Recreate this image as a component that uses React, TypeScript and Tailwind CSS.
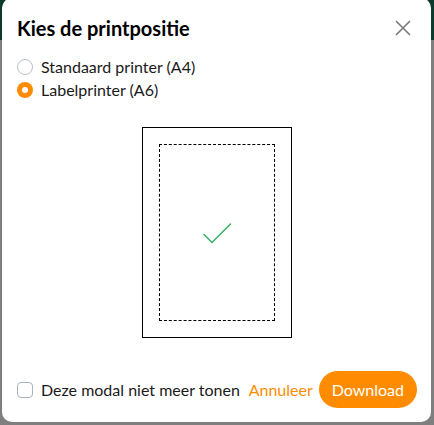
import { useState } from "react";

const font = { fontFamily: "Lato, 'Open Sans', sans-serif" };

function Radio({ checked, label, onClick }: { checked: boolean; label: string; onClick: () => void }) {
  return (
    <button onClick={onClick} className="flex items-center gap-2 h-[23px] text-[16px] leading-[23px] text-[#1a1a1a]">
      {checked ? (
        <span className="w-4 h-4 rounded-full bg-[#ff8c00] flex items-center justify-center">
          <span className="w-[6px] h-[6px] rounded-full bg-white" />
        </span>
      ) : (
        <span className="w-4 h-4 rounded-full border border-[#b9c0c8] bg-white" />
      )}
      <span>{label}</span>
    </button>
  );
}

export default function App() {
  const [choice, setChoice] = useState<"a4" | "a6">("a6");
  const [hide, setHide] = useState(false);

  return (
    <div className="relative w-[434px] h-[425px] overflow-hidden bg-[#7f7f7f]" style={font}>
      <div className="h-[40px] bg-[#0c3a2c]" />
      <div className="absolute left-[2px] top-[-2px] w-[429px] h-[424px] rounded-[10px] bg-white flex flex-col px-[15px] pt-[16px] pb-[14px]">
        <div className="flex items-center justify-between h-[28px]">
          <h2 className="text-[20px] font-bold text-black">Kies de printpositie</h2>
          <button className="w-6 h-6 flex items-center justify-center mr-[1px]" aria-label="Sluiten">
            <svg width="18" height="18" viewBox="0 0 18 18" fill="none" stroke="#7a7a7a" strokeWidth="1.6">
              <path d="M2 2L16 16M16 2L2 16" />
            </svg>
          </button>
        </div>

        <div className="flex flex-col mt-[13px]">
          <Radio checked={choice === "a4"} label="Standaard printer (A4)" onClick={() => setChoice("a4")} />
          <Radio checked={choice === "a6"} label="Labelprinter (A6)" onClick={() => setChoice("a6")} />
        </div>

        <div className="flex justify-center mt-[26px]">
          <div className="w-[150px] h-[211px] border border-black p-[16px]">
            <div className="w-full h-full border border-dashed border-black flex items-center justify-center">
              <svg width="32" height="24" viewBox="0 0 32 24" fill="none" stroke="#3bb26b" strokeWidth="1.6" strokeLinecap="round" strokeLinejoin="round">
                <path d="M3 13.5L11 21.5L29.5 3" />
              </svg>
            </div>
          </div>
        </div>

        <div className="flex items-center mt-auto">
          <button onClick={() => setHide(!hide)} className="flex items-center gap-2 text-[16px] text-[#1a1a1a]">
            <span className="w-4 h-4 rounded-[4px] border border-[#a9b3bf] bg-white" />
            <span>Deze modal niet meer tonen</span>
          </button>
          <button className="ml-auto text-[16px] text-[#ff8c00] mr-[6px]">Annuleer</button>
          <button className="h-[37px] px-[13px] rounded-full bg-[#ff8c00] text-white text-[16px] mr-[-1px]">Download</button>
        </div>
      </div>
    </div>
  );
}
